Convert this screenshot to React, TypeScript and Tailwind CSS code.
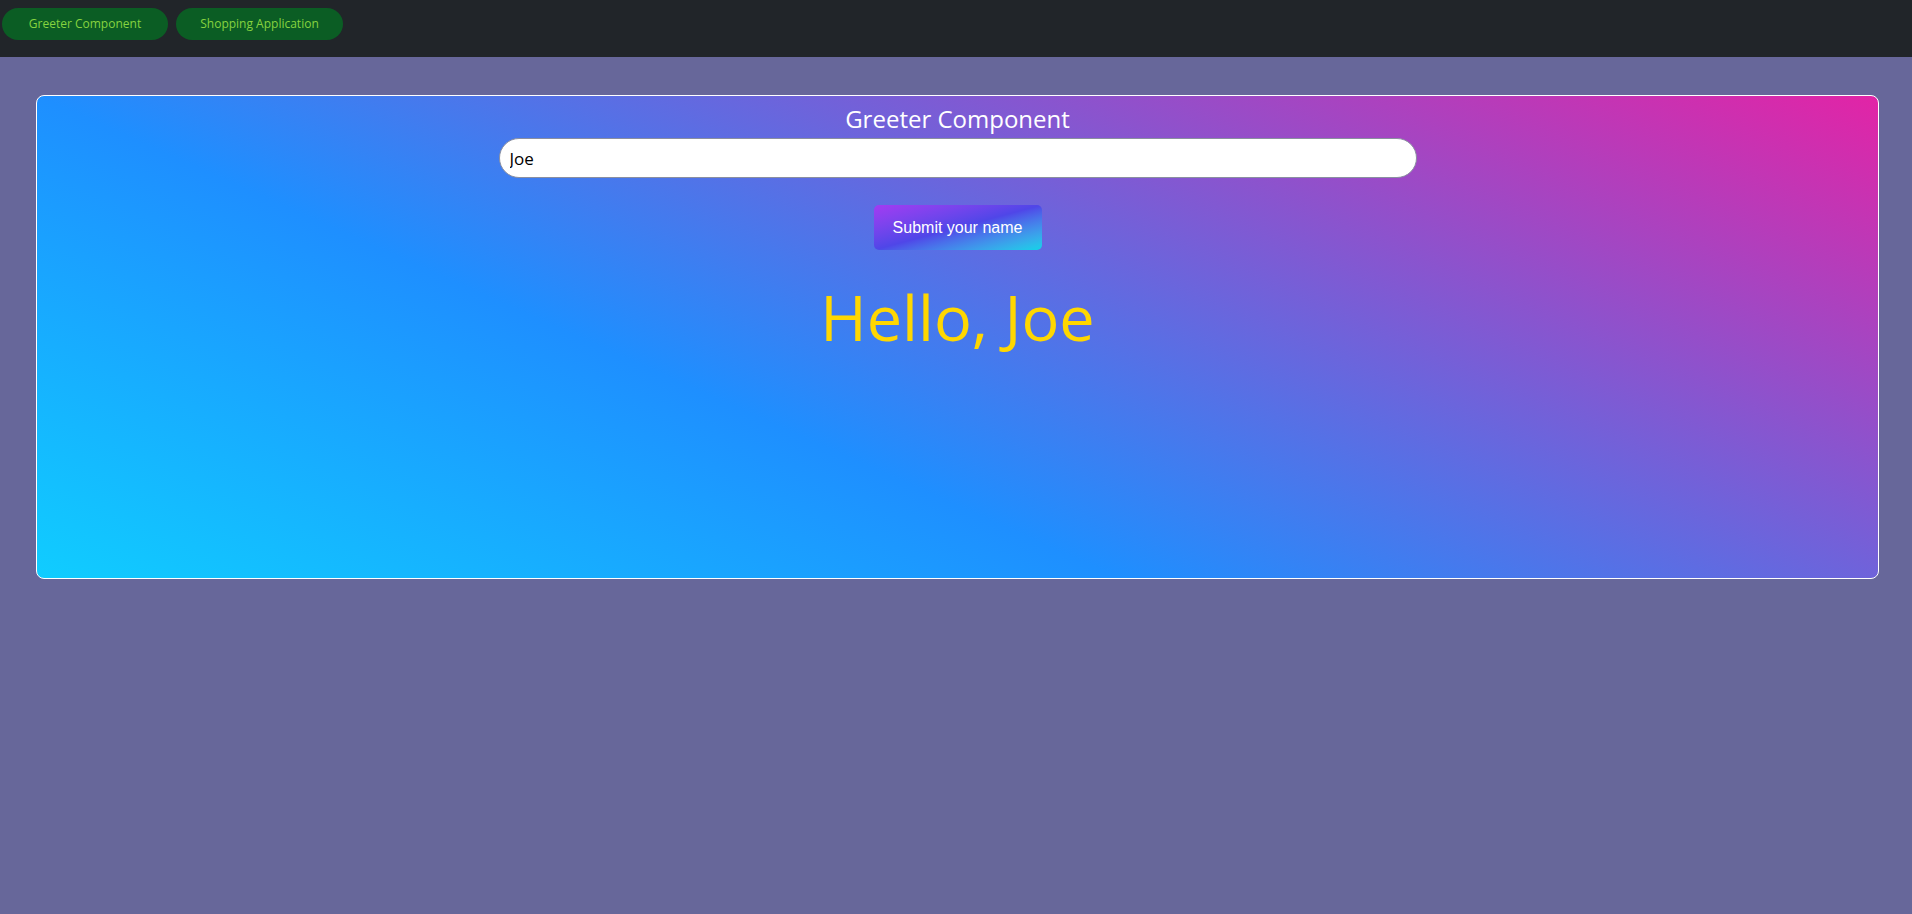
import React, { useState } from 'react';

const App: React.FC = () => {
    const [name, setName] = useState('Joe');
    const [greeted, setGreeted] = useState('Joe');

    return (
        <div className="min-h-screen bg-[#67679a]" style={{ fontFamily: "'Open Sans', 'Noto Sans', sans-serif" }}>
            {/* Top nav */}
            <nav className="h-[57px] bg-[#212529] flex items-start gap-2 px-[2px] pt-2">
                <button className="h-8 w-[166px] rounded-full bg-[#0b5d24] text-[#86d33f] text-[12px]">
                    Greeter Component
                </button>
                <button className="h-8 w-[167px] rounded-full bg-[#0b5d24] text-[#86d33f] text-[12px]">
                    Shopping Application
                </button>
            </nav>

            <div className="pt-[38px] pl-[36px] pr-[33px]">
                {/* Greeter card */}
                <section className="h-[484px] rounded-lg border border-white bg-[linear-gradient(24deg,#10cdff_0%,#1e8fff_37%,#e224a6_100%)] flex flex-col items-center">
                    <h2 className="mt-[8px] text-[24px] leading-[30px] text-white">Greeter Component</h2>
                    <input
                        value={name}
                        onChange={(e) => setName(e.target.value)}
                        className="mt-[4px] w-[918px] h-[40px] rounded-[20px] bg-white border border-[#8a8fa0] px-[10px] text-[17px] text-black outline-none"
                    />
                    <button
                        onClick={() => setGreeted(name)}
                        className="mt-[27px] w-[168px] h-[45px] rounded-[5px] bg-gradient-to-br from-[#a33af2] via-[#4f46e8] to-[#0bd3e8] text-white text-[16px]"
                        style={{ fontFamily: "'Liberation Sans', Arial, sans-serif" }}
                    >
                        Submit your name
                    </button>
                    <h1 className="mt-[25px] text-[63px] leading-[84px] text-[#ffd700]">Hello, {greeted}</h1>
                </section>
            </div>
        </div>
    );
};

export default App;
